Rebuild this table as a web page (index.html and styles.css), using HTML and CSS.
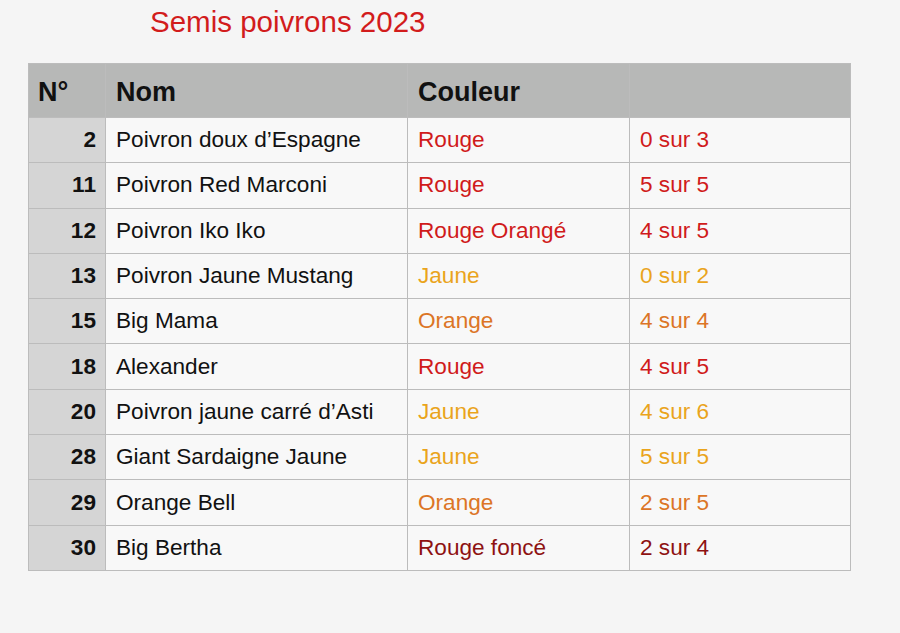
FILE: index.html
```html
<!DOCTYPE html>
<html lang="fr">
<head>
<meta charset="utf-8">
<link rel="stylesheet" href="styles.css">
</head>
<body>
<h1 class="title">Semis poivrons 2023</h1>
<table class="grid">
  <thead>
    <tr><th class="num">N°</th><th class="name">Nom</th><th class="color">Couleur</th><th class="score"></th></tr>
  </thead>
  <tbody>
    <tr><td class="num">2</td><td>Poivron doux d’Espagne</td><td class="red">Rouge</td><td class="red">0 sur 3</td></tr>
    <tr><td class="num">11</td><td>Poivron Red Marconi</td><td class="red">Rouge</td><td class="red">5 sur 5</td></tr>
    <tr><td class="num">12</td><td>Poivron Iko Iko</td><td class="red">Rouge Orangé</td><td class="red">4 sur 5</td></tr>
    <tr><td class="num">13</td><td>Poivron Jaune Mustang</td><td class="yellow">Jaune</td><td class="yellow">0 sur 2</td></tr>
    <tr><td class="num">15</td><td>Big Mama</td><td class="orange">Orange</td><td class="orange">4 sur 4</td></tr>
    <tr><td class="num">18</td><td>Alexander</td><td class="red">Rouge</td><td class="red">4 sur 5</td></tr>
    <tr><td class="num">20</td><td>Poivron jaune carré d’Asti</td><td class="yellow">Jaune</td><td class="yellow">4 sur 6</td></tr>
    <tr><td class="num">28</td><td>Giant Sardaigne Jaune</td><td class="yellow">Jaune</td><td class="yellow">5 sur 5</td></tr>
    <tr><td class="num">29</td><td>Orange Bell</td><td class="orange">Orange</td><td class="orange">2 sur 5</td></tr>
    <tr><td class="num">30</td><td>Big Bertha</td><td class="darkred">Rouge foncé</td><td class="darkred">2 sur 4</td></tr>
  </tbody>
</table>
</body>
</html>
```
FILE: styles.css
```css
html, body {
  margin: 0;
  padding: 0;
  background: #f5f5f5;
  font-family: "Liberation Sans", Arial, sans-serif;
}
body {
  padding: 0 0 0 28px;
}
.title {
  margin: 0;
  padding: 4px 0 0 122px;
  height: 63px;
  box-sizing: border-box;
  font-weight: normal;
  font-size: 29.5px;
  color: #d21c1c;
  line-height: 36px;
}
.grid {
  border-collapse: collapse;
  table-layout: fixed;
  width: 823px;
}
.grid th, .grid td {
  border: 1px solid #bcbcbc;
  padding: 0 10px;
  text-align: left;
  white-space: nowrap;
}
.grid th {
  background: #b7b8b7;
  height: 50px;
  padding-top: 3px;
  font-size: 27px;
  font-weight: bold;
  color: #111;
}
.grid td {
  background: #f8f8f8;
  height: 44.3px;
  font-size: 22.6px;
  color: #111;
}
.grid th.num { width: 57px; padding-left: 9px; }
.grid th.name { width: 281px; }
.grid th.color { width: 201px; }
.grid td.num {
  background: #d5d5d5;
  text-align: right;
  font-weight: bold;
  padding-right: 9px;
}
.grid td.red { color: #d01b1b; }
.grid td.yellow { color: #eaa41c; }
.grid td.orange { color: #dc7526; }
.grid td.darkred { color: #8e1212; }
```
